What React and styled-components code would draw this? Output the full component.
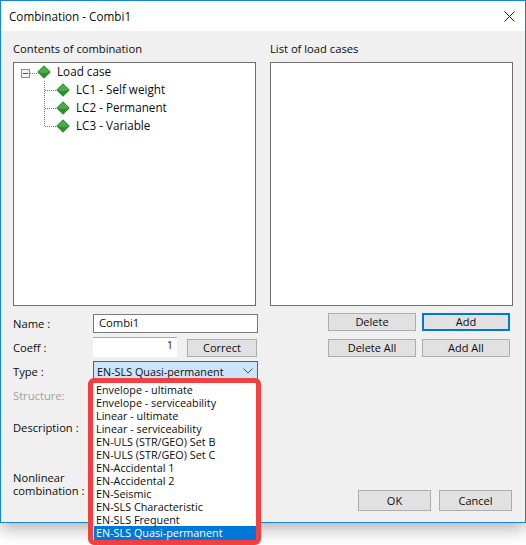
import React from 'react'
import styled, { createGlobalStyle } from 'styled-components'

const GlobalStyle = createGlobalStyle`
html, body {
  margin: 0;
  background: #fff;
}
body {
  font-family: "Open Sans", "Noto Sans", sans-serif;
  font-size: 11.2px;
  color: #0c0c0c;
}
`

const Page = styled.div`
position: relative;
width: 526px;
height: 545px;
overflow: hidden;
`

const Win = styled.div`
box-sizing: border-box;
width: 526px;
height: 523px;
border: 1px solid #1585dc;
display: flex;
flex-direction: column;
background: #f0f0f0;
box-shadow: 0 6px 16px rgba(0, 0, 0, 0.3);
`

const TitleBar = styled.div`
height: 30px;
flex: none;
background: #fff;
display: flex;
align-items: center;
justify-content: space-between;
padding: 0 10px 0 8px;
font-size: 11.7px;
`

const Body = styled.div`
flex: 1;
padding: 10px 12px 0 12px;
display: flex;
flex-direction: column;
`

const Lists = styled.div`
display: grid;
grid-template-columns: 243px 243px;
column-gap: 14px;
`

const Heading = styled.div`
height: 21px;
line-height: 16px;
`

const ListBox = styled.div`
box-sizing: border-box;
height: 244px;
background: #fff;
border: 1px solid #6d6d6d;
padding: 0 0 0 7px;
`

const TreeRow = styled.div`
display: flex;
align-items: center;
height: 18px;
padding-left: ${p => (p.$child ? 23 : 0)}px;
`

const RowLabel = styled.span`
margin-left: 6px;
white-space: nowrap;
font-size: 11.7px;
line-height: 16px;
padding-bottom: 2px;
`

const FormArea = styled.div`
display: flex;
flex: 1;
`

const FormCol = styled.div`
width: 245px;
padding-top: 8px;
`

const FormRow = styled.div`
display: flex;
align-items: center;
height: ${p => p.$h}px;
margin-bottom: ${p => p.$mb || 0}px;
`

const FieldLabel = styled.div`
width: 80px;
flex: none;
color: ${p => (p.$muted ? '#a0a0a0' : 'inherit')};
line-height: 13px;
`

const TextInput = styled.div`
box-sizing: border-box;
width: 165px;
height: 19px;
border: 1px solid #7a7a7a;
background: #fff;
padding-left: 5px;
line-height: 16px;
`

const CoeffInput = styled.div`
box-sizing: border-box;
width: 84px;
height: 20px;
background: #fff;
border-top: 1px solid #aaa;
text-align: right;
padding-right: 4px;
font-size: 11px;
line-height: 13px;
color: #301050;
`

const Button = styled.div`
box-sizing: border-box;
display: flex;
align-items: center;
justify-content: center;
width: ${p => p.$w}px;
height: ${p => p.$h || 18}px;
margin-left: ${p => p.$ml || 0}px;
align-self: flex-end;
font-size: 11px;
line-height: 14px;
background: #e1e1e1;
border: 1px solid #adadad;
${p => p.$focus && 'border: 2px solid #0078d7;'}
`

const Select = styled.div`
box-sizing: border-box;
width: 165px;
height: 20px;
border: 1px solid #0078d7;
background: #cce4f7;
display: flex;
align-items: center;
justify-content: space-between;
padding: 0 4px 0 3px;
font-size: 10.8px;
`

const ButtonCol = styled.div`
flex: 1;
padding: 7px 0 0 70px;
display: flex;
flex-direction: column;
`

const ButtonRow = styled.div`
display: flex;
gap: 6px;
margin-bottom: 8px;
`

const Footer = styled.div`
margin-top: auto;
margin-bottom: 11px;
margin-left: 30px;
display: flex;
gap: 8px;
`

const Dropdown = styled.div`
position: absolute;
left: 88px;
top: 378px;
width: 163px;
height: 157px;
border: 5px solid #f24040;
border-radius: 6px;
background: #fff;
font-size: 10.8px;
`

const Option = styled.div`
height: 13px;
line-height: 13px;
margin-left: 1px;
padding-left: 2px;
white-space: nowrap;
${p => p.$active && `
  background: #0078d7;
  color: #fff;
  height: 14px;
`}
`

const Diamond = () => (
  <svg width="14" height="14" viewBox="0 0 14 14">
    <path d="M7 0.2L13.8 7L7 13.8L0.2 7Z" fill="#2f8f2f" />
    <path d="M7 1.4L12.6 6.9L7 8.2L1.4 6.9Z" fill="#4aad4a" />
  </svg>
)

const Expander = () => (
  <svg width="16" height="18" viewBox="0 0 16 18">
    <rect x="0.5" y="6.5" width="8" height="8" fill="#f4f4f4" stroke="#8c8c8c" />
    <path d="M2 10.5H7" stroke="#3a5a9a" />
    <path d="M9 10.5H16" stroke="#777" strokeDasharray="1 1" />
  </svg>
)

const Connector = ({ tall }) => (
  <svg width="12" height="18" viewBox="0 0 12 18">
    <path d={tall ? 'M0.5 0V18' : 'M0.5 0V9'} stroke="#777" strokeDasharray="1 1" />
    <path d="M1 9.5H12" stroke="#777" strokeDasharray="1 1" />
  </svg>
)

const CloseIcon = () => (
  <svg width="11" height="11" viewBox="0 0 11 11">
    <path d="M0.5 0.5L10.5 10.5M10.5 0.5L0.5 10.5" stroke="#222" strokeWidth="1" />
  </svg>
)

const Chevron = () => (
  <svg width="10" height="6" viewBox="0 0 10 6">
    <path d="M0.5 0.5L5 5L9.5 0.5" fill="none" stroke="#555" strokeWidth="1" />
  </svg>
)

const cases = ['LC1 - Self weight', 'LC2 - Permanent', 'LC3 - Variable']

const types = [
  'Envelope - ultimate',
  'Envelope - serviceability',
  'Linear - ultimate',
  'Linear - serviceability',
  'EN-ULS (STR/GEO) Set B',
  'EN-ULS (STR/GEO) Set C',
  'EN-Accidental 1',
  'EN-Accidental 2',
  'EN-Seismic',
  'EN-SLS Characteristic',
  'EN-SLS Frequent',
  'EN-SLS Quasi-permanent',
]

const App = () => {
  return (
    <Page>
      <GlobalStyle />
      <Win>
        <TitleBar>
          Combination - Combi1
          <CloseIcon />
        </TitleBar>
        <Body>
          <Lists>
            <div>
              <Heading>Contents of combination</Heading>
              <ListBox>
                <TreeRow>
                  <Expander />
                  <Diamond />
                  <RowLabel>Load case</RowLabel>
                </TreeRow>
                {cases.map((c, i) => (
                  <TreeRow $child key={c}>
                    <Connector tall={i < cases.length - 1} />
                    <Diamond />
                    <RowLabel>{c}</RowLabel>
                  </TreeRow>
                ))}
              </ListBox>
            </div>
            <div>
              <Heading>List of load cases</Heading>
              <ListBox />
            </div>
          </Lists>
          <FormArea>
            <FormCol>
              <FormRow $h={19} $mb={4}>
                <FieldLabel>Name :</FieldLabel>
                <TextInput>Combi1</TextInput>
              </FormRow>
              <FormRow $h={20} $mb={4}>
                <FieldLabel>Coeff :</FieldLabel>
                <CoeffInput>1</CoeffInput>
                <Button $w={70} $ml={10}>Correct</Button>
              </FormRow>
              <FormRow $h={20} $mb={4}>
                <FieldLabel>Type :</FieldLabel>
                <Select>
                  EN-SLS Quasi-permanent
                  <Chevron />
                </Select>
              </FormRow>
              <FormRow $h={20} $mb={12}>
                <FieldLabel $muted>Structure:</FieldLabel>
              </FormRow>
              <FormRow $h={20} $mb={33}>
                <FieldLabel>Description :</FieldLabel>
              </FormRow>
              <FormRow $h={28}>
                <FieldLabel>Nonlinear combination :</FieldLabel>
              </FormRow>
            </FormCol>
            <ButtonCol>
              <ButtonRow>
                <Button $w={88}>Delete</Button>
                <Button $w={88} $focus>Add</Button>
              </ButtonRow>
              <ButtonRow>
                <Button $w={88}>Delete All</Button>
                <Button $w={88}>Add All</Button>
              </ButtonRow>
              <Footer>
                <Button $w={73} $h={21}>OK</Button>
                <Button $w={73} $h={21}>Cancel</Button>
              </Footer>
            </ButtonCol>
          </FormArea>
        </Body>
      </Win>
      <Dropdown>
        {types.map((t, i) => (
          <Option key={t} $active={i === types.length - 1}>{t}</Option>
        ))}
      </Dropdown>
    </Page>
  )
}

export default App
